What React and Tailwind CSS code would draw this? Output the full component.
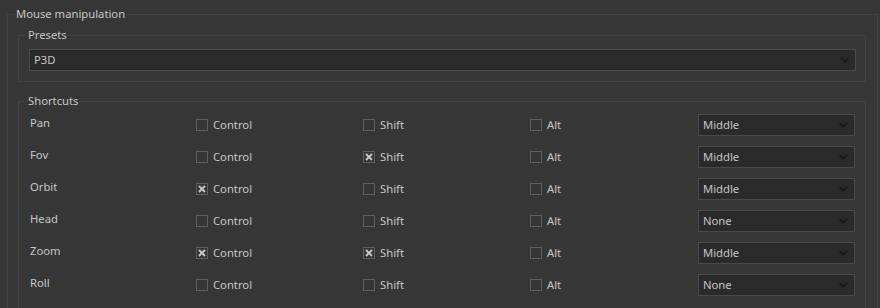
import React from 'react';

const rows = [
  { label: 'Pan', ctrl: false, shift: false, alt: false, button: 'Middle' },
  { label: 'Fov', ctrl: false, shift: true, alt: false, button: 'Middle' },
  { label: 'Orbit', ctrl: true, shift: false, alt: false, button: 'Middle' },
  { label: 'Head', ctrl: false, shift: false, alt: false, button: 'None' },
  { label: 'Zoom', ctrl: true, shift: true, alt: false, button: 'Middle' },
  { label: 'Roll', ctrl: false, shift: false, alt: false, button: 'None' },
];

const Combo = ({ value }) => (
  <div className="flex items-center justify-between h-[22px] border border-[#4a4a4a] bg-[#2a2a2a] pl-[4px] pr-[6px]">
    <span>{value}</span>
    <svg width="9" height="6" viewBox="0 0 9 6" className="text-[#191919]">
      <polyline points="0.5,0.8 4.5,4.8 8.5,0.8" fill="none" stroke="currentColor" strokeWidth="1.6" />
    </svg>
  </div>
);

const Check = ({ label, checked }) => (
  <div className="flex items-center gap-[5px]">
    <svg width="12" height="12" viewBox="0 0 12 12">
      <rect x="0.5" y="0.5" width="11" height="11" fill="none" stroke="#5e5e5e" />
      {checked && (
        <path d="M3 3 L9 9 M9 3 L3 9" stroke="#c8c8c8" strokeWidth="1.9" />
      )}
    </svg>
    <span>{label}</span>
  </div>
);

export default function App() {
  return (
    <div className="w-[880px] h-[308px] overflow-hidden bg-[#363636] text-[11.25px] leading-4 text-[#c6c6c6] font-['Noto_Sans',sans-serif]">
      <div className="pt-[6px] pl-[7px] pr-[2px]">
        {/* Mouse manipulation group */}
        <fieldset className="border border-[#424242] pl-[10px] pr-[11px] pb-[40px]">
          <legend className="-ml-[3px] px-[1px]">Mouse manipulation</legend>

          <fieldset className="mt-[5px] border border-[#424242] pl-[10px] pr-[9px] pt-[6px] pb-[10px]">
            <legend className="-ml-[2px] px-[1px]">Presets</legend>
            <Combo value="P3D" />
          </fieldset>

          <fieldset className="mt-[11px] border border-[#424242] pl-[10px] pr-[9px] pt-[5px] pb-[30px]">
            <legend className="-ml-[2px] px-[1px]">Shortcuts</legend>
            <div className="grid grid-cols-[167px_167px_167px_168px_157px] gap-y-[10px]">
              {rows.map((r) => (
                <React.Fragment key={r.label}>
                  <div className="self-start pt-[1px] pl-[1px]">{r.label}</div>
                  <Check label="Control" checked={r.ctrl} />
                  <Check label="Shift" checked={r.shift} />
                  <Check label="Alt" checked={r.alt} />
                  <Combo value={r.button} />
                </React.Fragment>
              ))}
            </div>
          </fieldset>
        </fieldset>
      </div>
    </div>
  );
}
